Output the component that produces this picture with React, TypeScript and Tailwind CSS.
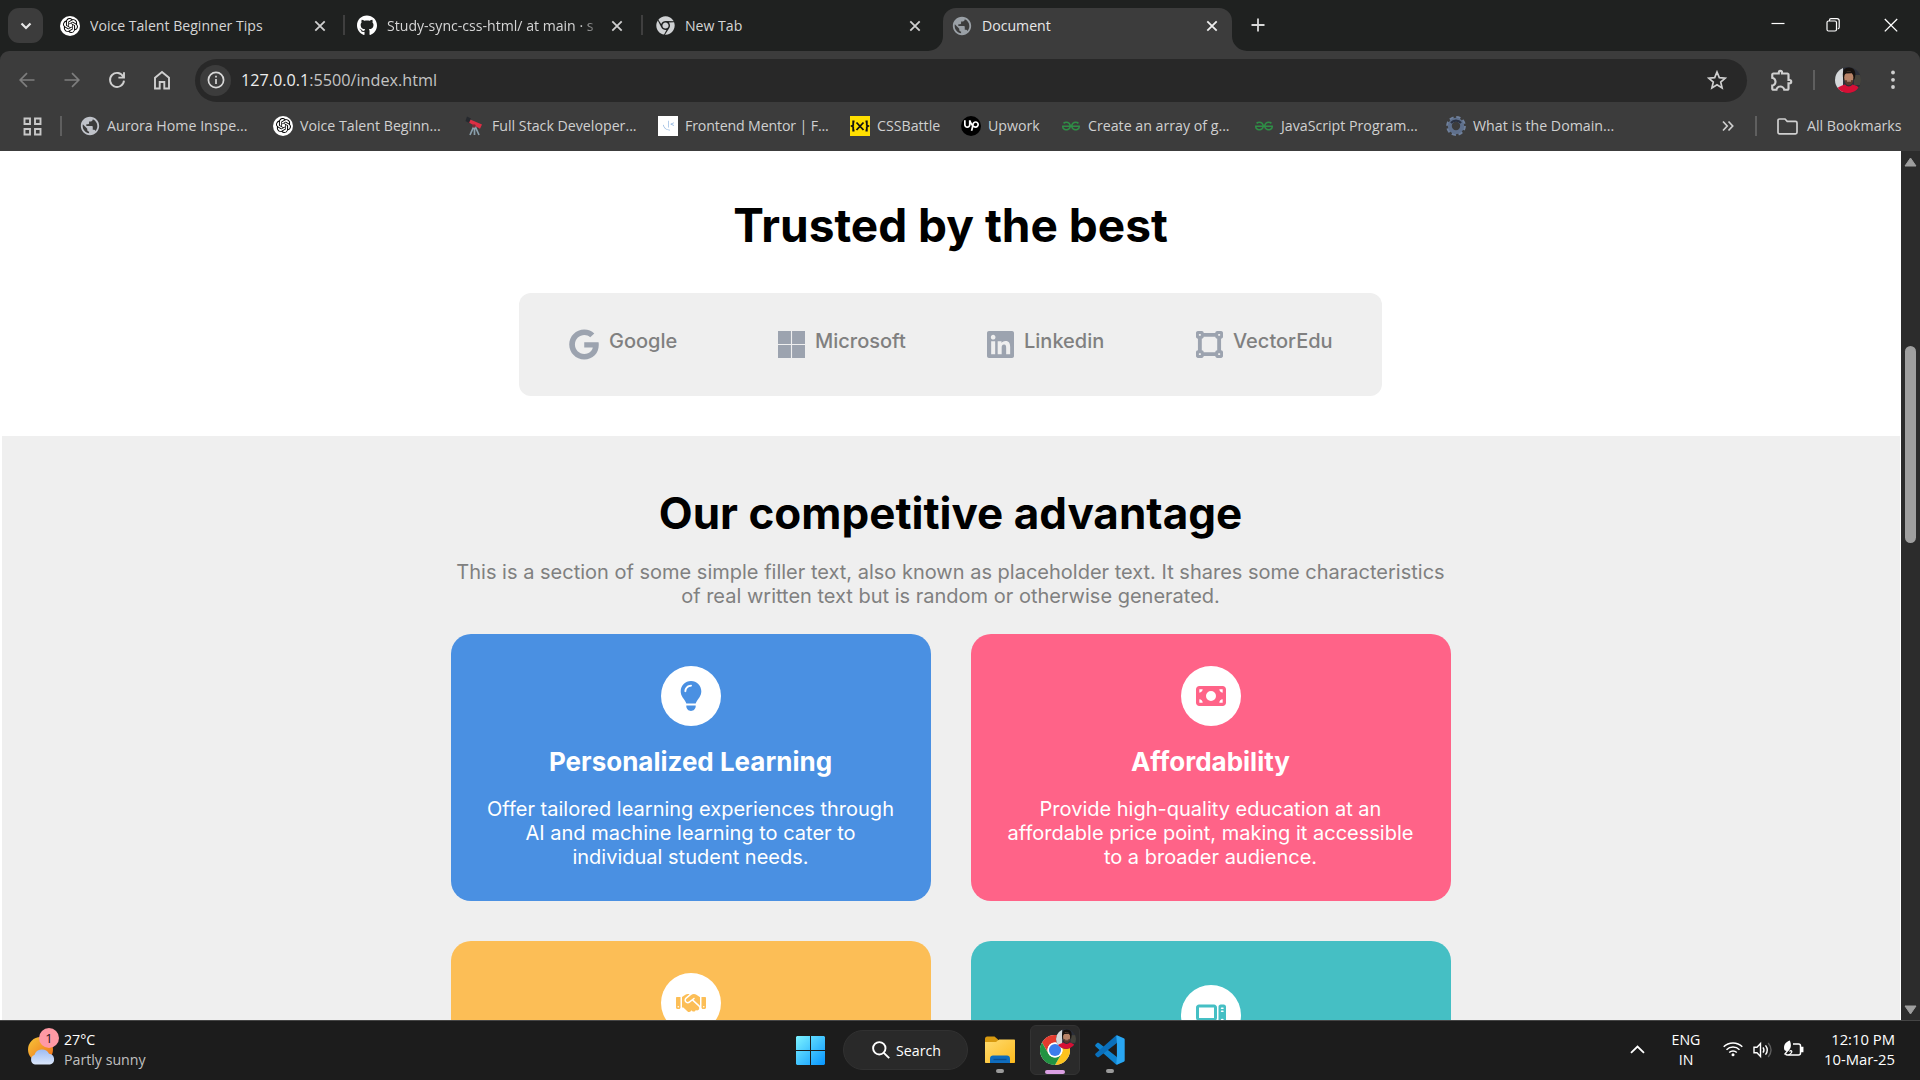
import type { ReactNode } from "react";
import { FaChrome, FaGithub } from "react-icons/fa";
import {
  FaComputer,
  FaGoogle,
  FaHandshake,
  FaLightbulb,
  FaLinkedin,
  FaMicrosoft,
  FaMoneyBill,
  FaVectorSquare,
} from "react-icons/fa6";
import { MdOutlineExtension, MdPublic } from "react-icons/md";
import { SiFrontendmentor, SiGeeksforgeeks, SiOpenai, SiUpwork } from "react-icons/si";

function OpenAiBadge() {
  return (
    <span className="flex size-5 items-center justify-center rounded-full bg-white text-black">
      <SiOpenai size={15} />
    </span>
  );
}

function Avatar({ size }: { size: number }) {
  return (
    <svg width={size} height={size} viewBox="0 0 26 26" className="block rounded-full">
      <rect width="26" height="26" fill="#2b2f3a" />
      <rect width="8" height="26" fill="#d5d8da" />
      <rect x="19" y="8" width="7" height="10" fill="#46443c" />
      <path d="M8.500 13C6.500 4 9 .500 14 .500c6 0 7.500 5 5.500 12z" fill="#17120f" />
      <ellipse cx="13.800" cy="10.500" rx="4.600" ry="6.500" fill="#b98468" />
      <path d="M9.200 8C9.500 4.500 12 4 14.500 4.200 17 4.300 18.400 5.500 18.500 8.500L17 6.300 11 6.500z" fill="#17120f" />
      <path d="M9.600 13c2 .600 6.500.600 8.500 0 0 3.500-2 5.300-4.200 5.300S9.600 16.500 9.600 13z" fill="#5a3a2c" />
      <path d="M12 14h4" stroke="#d0a08a" strokeWidth="1" />
      <path d="M0 26c1-5.500 5-7 10-8.500 2 2.500 5.500 2.500 7.500 0C22 18.500 25 20 26 26z" fill="#d60f35" />
    </svg>
  );
}

function CloseIcon({ bright }: { bright?: boolean }) {
  return (
    <svg width="12" height="12" viewBox="0 0 12 12" className={bright ? "text-[#eeeeee]" : "text-[#cfcfcf]"}>
      <path d="M1.300 1.300l9.400 9.400M10.700 1.300l-9.400 9.400" stroke="currentColor" strokeWidth="1.800" fill="none" />
    </svg>
  );
}

function Tab({ icon, title, className, fade }: { icon: ReactNode; title: string; className: string; fade?: boolean }) {
  return (
    <div className={`flex items-center ${className}`}>
      <span className="mr-[10px] flex w-5 shrink-0 justify-center">{icon}</span>
      <span className={`flex-1 overflow-hidden whitespace-nowrap ${fade ? "mask-r-from-86% mask-r-to-97%" : ""}`}>{title}</span>
      <CloseIcon />
    </div>
  );
}

function TabStrip() {
  return (
    <div className="flex h-[51px] shrink-0 items-start bg-[#1f2120] text-[14.1px] text-[#d5d5d5]">
      <div className="ml-2 mt-2 flex size-[35px] items-center justify-center rounded-[11px] bg-[#3c3c3c]">
        <svg width="12" height="8" viewBox="0 0 12 8">
          <path d="M1.500 1.500L6 6l4.500-4.500" stroke="#e8e8e8" strokeWidth="2.200" fill="none" />
        </svg>
      </div>
      <Tab className="ml-[17px] h-[51px] w-[266px]" icon={<OpenAiBadge />} title="Voice Talent Beginner Tips" />
      <div className="ml-[17px] mt-[15px] h-5 w-[2px] bg-[#3f3f3f]" />
      <Tab
        className="ml-[12px] h-[51px] w-[266px]"
        icon={<FaGithub size={21} className="text-white" />}
        title="Study-sync-css-html/ at main · s"
        fade
      />
      <div className="ml-[18px] mt-[15px] h-5 w-[2px] bg-[#3f3f3f]" />
      <Tab
        className="ml-[12px] h-[51px] w-[266px]"
        icon={<FaChrome size={19} className="text-[#cfd1d3]" />}
        title="New Tab"
      />
      <div className="ml-[7px] flex h-[51px] items-end">
        <svg width="15" height="15" viewBox="0 0 15 15">
          <path d="M0 15H15V0A15 15 0 0 1 0 15z" fill="#3c3c3c" />
        </svg>
        <div className="flex h-[43px] w-[289px] items-center rounded-t-[13px] bg-[#3c3c3c] pb-[8px] pl-[8px] pr-[14px] text-[#e8e8e8]">
          <MdPublic size={22} className="mr-[9px] text-[#9aa0a6]" />
          <span className="flex-1">Document</span>
          <CloseIcon bright />
        </div>
        <svg width="15" height="15" viewBox="0 0 15 15">
          <path d="M15 15H0V0A15 15 0 0 0 15 15z" fill="#3c3c3c" />
        </svg>
      </div>
      <svg width="14" height="14" viewBox="0 0 14 14" className="ml-[4px] mt-[18px]">
        <path d="M7 .500v13M.500 7h13" stroke="#d8d8d8" strokeWidth="1.800" />
      </svg>
      <div className="ml-auto mr-[22px] mt-[17px] flex items-center">
        <svg width="14" height="16" viewBox="0 0 14 16">
          <path d="M.500 6.500h13" stroke="#fff" strokeWidth="1.200" />
        </svg>
        <svg width="14" height="16" viewBox="0 0 14 16" className="ml-[41px]" fill="none" stroke="#fff" strokeWidth="1.200">
          <rect x="1" y="4" width="9.500" height="10" rx="1.500" />
          <path d="M3.500 4V3.200C3.500 2.300 4.200 1.600 5 1.600h6c1.200 0 2.200 1 2.200 2.200v6.500c0 .900-.600 1.600-1.500 1.700" />
        </svg>
        <svg width="14" height="16" viewBox="0 0 14 16" className="ml-[44px]">
          <path d="M.800 2l12.400 12.400M13.200 2L.800 14.400" stroke="#fff" strokeWidth="1.300" />
        </svg>
      </div>
    </div>
  );
}

function Toolbar() {
  return (
    <div className="flex h-[58px] shrink-0 items-center bg-[#1f2120]">
      <div className="flex h-full w-full items-center rounded-t-[9px] bg-[#3c3c3c]">
        <svg width="16" height="16" viewBox="0 0 16 16" className="ml-[19px]" fill="none" stroke="#7e7e7e" strokeWidth="1.700">
          <path d="M15.500 8H1.500M8 1.200L1.200 8 8 14.800" />
        </svg>
        <svg width="16" height="16" viewBox="0 0 16 16" className="ml-[29px]" fill="none" stroke="#7e7e7e" strokeWidth="1.700">
          <path d="M.500 8h14M8 1.200L14.800 8 8 14.800" />
        </svg>
        <svg width="18" height="18" viewBox="0 0 18 18" className="ml-[28px]" fill="none" stroke="#cfcfcf" strokeWidth="1.900">
          <path d="M15.300 5.800A7 7 0 1 0 16 9.600M16 1.200V6.600H10.400" />
        </svg>
        <svg width="18" height="20" viewBox="0 0 18 20" className="ml-[27px]" fill="none" stroke="#cfcfcf" strokeWidth="1.900">
          <path d="M2 7.800L9 2l7 5.800V18.500H11.300V12H6.700v6.500H2z" />
        </svg>
        <div className="ml-[24px] flex h-[43px] w-[1552px] items-center rounded-full bg-[#282828] pl-[5px] pr-[20px]">
          <div className="flex size-[31px] items-center justify-center rounded-full bg-[#3c3c3c]">
            <svg width="18" height="18" viewBox="0 0 18 18" fill="none" stroke="#d8d8d8" strokeWidth="1.700">
              <circle cx="9" cy="9" r="7.600" />
              <path d="M9 8v5M9 4.800v1.800" />
            </svg>
          </div>
          <div className="ml-[10px] flex-1 text-[16.2px] text-[#c4c4c4]">
            <span className="text-[#ededed]">127.0.0.1</span>:5500/index.html
          </div>
          <svg width="20" height="20" viewBox="0 0 20 20" fill="none" stroke="#cfcfcf" strokeWidth="1.700">
            <path d="M10 2l2.300 5.600 6 .500-4.600 3.900 1.400 5.900L10 14.800l-5.100 3.100 1.400-5.900L1.700 8.100l6-.500z" />
          </svg>
        </div>
        <MdOutlineExtension size={26} className="ml-[22px] text-[#cfcfcf]" />
        <div className="ml-[18px] h-5 w-[2px] bg-[#5f5f5f]" />
        <div className="ml-[20px]">
          <Avatar size={26} />
        </div>
        <svg width="4" height="20" viewBox="0 0 4 20" className="ml-[30px]" fill="#cfcfcf">
          <circle cx="2" cy="2.500" r="1.900" />
          <circle cx="2" cy="9.800" r="1.900" />
          <circle cx="2" cy="17" r="1.900" />
        </svg>
      </div>
    </div>
  );
}

function Bookmark({ icon, title, className }: { icon: ReactNode; title: string; className: string }) {
  return (
    <div className={`flex shrink-0 items-center whitespace-nowrap ${className}`}>
      <span className="mr-[7px] flex size-5 shrink-0 items-center justify-center">{icon}</span>
      {title}
    </div>
  );
}

function BookmarkBar() {
  return (
    <div className="flex h-[42px] shrink-0 items-center bg-[#3c3c3c] pb-[8px] text-[14.2px] text-[#d0d0d0]">
      <svg width="19" height="19" viewBox="0 0 19 19" className="ml-[23px]" fill="none" stroke="#c8c8c8" strokeWidth="1.900">
        <path d="M1.500 1.500h5.500v5.500h-5.500zM12 1.500h5.500v5.500H12zM1.500 12h5.500v5.500h-5.500zM12 12h5.500v5.500H12z" />
      </svg>
      <div className="ml-[18px] mr-[18px] h-5 w-[2px] bg-[#5f5f5f]" />
      <Bookmark className="w-[193px]" icon={<MdPublic size={22} className="shrink-0 text-[#bfc2c9]" />} title="Aurora Home Inspe..." />
      <Bookmark className="w-[192px]" icon={<OpenAiBadge />} title="Voice Talent Beginn..." />
      <Bookmark
        className="w-[193px]"
        icon={
          <svg width="20" height="20" viewBox="0 0 20 20">
            <path d="M9 10l-4 9M9.500 10v9M10 10l4 9" stroke="#8aa0ad" strokeWidth="1.700" />
            <path d="M4 3l13 5.500-2 4.200L3 6z" fill="#dd2e44" />
            <path d="M2 .500l4 2-2 4.500-3.500-2z" fill="#26292e" />
            <circle cx="9" cy="10" r="1.800" fill="#7a2a35" />
          </svg>
        }
        title="Full Stack Developer..."
      />
      <Bookmark
        className="w-[192px] tracking-[-0.15px]"
        icon={
          <span className="flex size-5 items-center justify-center bg-white text-[#8fb4de]">
            <SiFrontendmentor size={11} />
          </span>
        }
        title="Frontend Mentor | F..."
      />
      <Bookmark
        className="w-[111px]"
        icon={
          <svg width="20" height="20" viewBox="0 0 20 20" fill="none" stroke="#111" strokeWidth="1.800">
            <rect width="20" height="20" fill="#ffdf00" stroke="none" />
            <path d="M4.500 5.500H3.200V9L1.800 10l1.400 1v3.500h1.300M15.500 5.500h1.300V9l1.400 1-1.400 1v3.500h-1.300M6.500 6.500l7 7.500M13.500 6.500l-7 7.500" />
          </svg>
        }
        title="CSSBattle"
      />
      <Bookmark
        className="w-[100px]"
        icon={
          <span className="flex size-5 items-center justify-center rounded-full bg-black text-white">
            <SiUpwork size={15} />
          </span>
        }
        title="Upwork"
      />
      <Bookmark className="w-[193px]" icon={<SiGeeksforgeeks size={18} className="text-[#2f8d46]" />} title="Create an array of g..." />
      <Bookmark className="w-[192px]" icon={<SiGeeksforgeeks size={18} className="text-[#2f8d46]" />} title="JavaScript Program..." />
      <Bookmark
        className="w-[268px]"
        icon={
          <svg width="20" height="20" viewBox="0 0 20 20" fill="none">
            <circle cx="10" cy="10" r="8.700" stroke="#70819c" strokeWidth="2.400" strokeDasharray="4.200 2.630" />
            <circle cx="10" cy="10" r="6.200" stroke="#5f708c" strokeWidth="4" />
            <path d="M5 7A6.300 6.300 0 0 1 15 7" stroke="#2b3242" strokeWidth="2.200" />
          </svg>
        }
        title="What is the Domain..."
      />
      <svg width="12" height="12" viewBox="0 0 12 12" className="ml-[8px]" fill="none" stroke="#cfcfcf" strokeWidth="1.700">
        <path d="M1 1.500L5.200 6 1 10.500M6.500 1.500L10.700 6l-4.200 4.500" />
      </svg>
      <div className="ml-[21px] h-5 w-[2px] bg-[#5f5f5f]" />
      <svg width="21" height="17" viewBox="0 0 21 17" className="ml-[20px]" fill="none" stroke="#cfcfcf" strokeWidth="1.700">
        <path d="M1 2.500C1 1.600 1.600 1 2.500 1H8l2.200 2.300h8.300c.900 0 1.500.600 1.500 1.500v9.500c0 .900-.600 1.500-1.500 1.500h-16C1.600 15.800 1 15.200 1 14.300z" />
      </svg>
      <span className="ml-[9px] whitespace-nowrap">All Bookmarks</span>
    </div>
  );
}

const companies = [
  { name: "Google", icon: <FaGoogle size={31} className="w-[30px]" />, gap: "gap-[10px]" },
  { name: "Microsoft", icon: <FaMicrosoft size={31} className="w-[27px]" />, gap: "gap-[10px]" },
  { name: "Linkedin", icon: <FaLinkedin size={31} className="w-[27px]" />, gap: "gap-[10px]" },
  { name: "VectorEdu", icon: <FaVectorSquare size={31} className="w-[27px]" />, gap: "gap-[10px]" },
];

function Card({ className, icon, title, text }: { className: string; icon: ReactNode; title?: string; text?: string }) {
  return (
    <div className={`flex h-[267px] w-[480px] flex-col items-center rounded-[20px] px-[30px] text-center text-white ${className}`}>
      <div className="flex size-[60px] shrink-0 items-center justify-center rounded-full bg-white">{icon}</div>
      {title && <h3 className="mt-[20px] text-[26px] font-bold leading-8">{title}</h3>}
      {text && <p className="mt-[19px] text-[20px] leading-6">{text}</p>}
    </div>
  );
}

function Page() {
  return (
    <div className="flex min-h-0 flex-1">
      <main className="flex min-w-0 flex-1 flex-col overflow-hidden bg-white pl-[2px] pr-px font-['Inter',sans-serif]">
        <section className="flex h-[285px] shrink-0 flex-col items-center pr-px">
          <h1 className="mt-[46px] text-[46px] font-bold leading-[56px] text-black">Trusted by the best</h1>
          <div className="mt-[40px] grid h-[103px] w-[863px] grid-cols-[repeat(4,209px)] rounded-[12px] bg-[#efefef] pl-[50px] pt-[36px]">
            {companies.map((c) => (
              <div key={c.name} className={`flex h-[31px] text-[#9ca3af] ${c.gap}`}>
                {c.icon}
                <span className="text-[20px] font-medium leading-6 text-[#808080]">{c.name}</span>
              </div>
            ))}
          </div>
        </section>
        <section className="flex flex-1 shrink-0 flex-col items-center bg-[#efefef] pr-px">
          <h2 className="mt-[50px] text-[44px] font-bold leading-[54px] text-black">Our competitive advantage</h2>
          <p className="mt-[20px] w-[1000px] text-center text-[20px] leading-6 text-[#808080]">
            This is a section of some simple filler text, also known as placeholder text. It shares some characteristics of real
            written text but is random or otherwise generated.
          </p>
          <div className="mt-[26px] grid grid-cols-2 gap-10">
            <Card
              className="bg-[#4a90e2] pt-8"
              icon={<FaLightbulb size={30} className="text-[#4a90e2]" />}
              title="Personalized Learning"
              text="Offer tailored learning experiences through AI and machine learning to cater to individual student needs."
            />
            <Card
              className="bg-[#ff6388] pt-8"
              icon={<FaMoneyBill size={30} className="text-[#ff6388]" />}
              title="Affordability"
              text="Provide high-quality education at an affordable price point, making it accessible to a broader audience."
            />
            <Card className="bg-[#fcbe56] pt-8" icon={<FaHandshake size={30} className="text-[#fcbe56]" />} />
            <Card className="bg-[#45bfc4] pt-11" icon={<FaComputer size={30} className="text-[#45bfc4]" />} />
          </div>
        </section>
      </main>
      <div className="flex w-[19px] shrink-0 flex-col items-center bg-[#2c2c2c]">
        <svg width="13" height="10" viewBox="0 0 13 10" className="mt-[6px]">
          <path d="M6.500 1L12 9H1z" fill="#9f9f9f" stroke="#9f9f9f" strokeLinejoin="round" />
        </svg>
        <div className="mt-[179px] h-[197px] w-[11px] rounded-full bg-[#9f9f9f]" />
        <svg width="13" height="10" viewBox="0 0 13 10" className="mb-[5px] mt-auto">
          <path d="M6.500 9L12 1H1z" fill="#9f9f9f" stroke="#9f9f9f" strokeLinejoin="round" />
        </svg>
      </div>
    </div>
  );
}

function ChromeLogo() {
  return (
    <svg width="30" height="30" viewBox="0 0 48 48">
      <circle cx="24" cy="24" r="24" fill="#fff" />
      <path d="M3.200 12A24 24 0 0 1 44.800 12H24A12 12 0 0 0 13.600 30z" fill="#e33b2e" />
      <path d="M44.800 12A24 24 0 0 1 24 48L34.400 30A12 12 0 0 0 24 12z" fill="#fcc31e" />
      <path d="M24 48A24 24 0 0 1 3.200 12L13.600 30A12 12 0 0 0 34.400 30z" fill="#229342" />
      <circle cx="24" cy="24" r="12" fill="#fff" />
      <circle cx="24" cy="24" r="9.700" fill="#3b7ded" />
    </svg>
  );
}

function Taskbar() {
  return (
    <div className="flex h-[60px] shrink-0 items-start border-t border-[#454545] bg-[#1c1c1c] text-[14.2px] text-white">
      <div className="ml-[27px] mt-[5px] w-[37px]">
        <svg width="33" height="40" viewBox="0 0 33 40">
          <defs>
            <linearGradient id="sun" x1="0" y1="0" x2="1" y2="1">
              <stop offset="0" stopColor="#f6c63a" />
              <stop offset="1" stopColor="#f06a16" />
            </linearGradient>
            <linearGradient id="cloud" x1="0" y1="0" x2="0" y2="1">
              <stop offset="0" stopColor="#9dbcf3" />
              <stop offset="1" stopColor="#dbe7fb" />
            </linearGradient>
          </defs>
          <circle cx="13.500" cy="23.500" r="12.500" fill="url(#sun)" />
          <path d="M8 38.500a5 5 0 0 1-.600-9.600A8 8 0 0 1 22 27.700a5.500 5.500 0 0 1 1 10.800z" fill="url(#cloud)" />
          <circle cx="22" cy="12" r="10" fill="#ff99a4" />
          <text x="22" y="17" textAnchor="middle" fontSize="13" fill="#2a1216" className="font-['Open_Sans',sans-serif]">
            1
          </text>
        </svg>
      </div>
      <div className="mt-[9px] w-[110px] leading-5">
        <div>27°C</div>
        <div className="text-[#c0c0c0]">Partly sunny</div>
      </div>
      <svg width="29" height="29" viewBox="0 0 29 29" className="ml-[622px] mt-[15px]">
        <defs>
          <linearGradient id="win" x1="0" y1="0" x2="1" y2="1">
            <stop offset="0" stopColor="#7df3ff" />
            <stop offset="1" stopColor="#0795ff" />
          </linearGradient>
          <clipPath id="panes">
            <path d="M1 0H14V14H0V1zM15 0H28L29 1V14H15zM0 15H14V29H1L0 28zM15 15H29V28L28 29H15z" />
          </clipPath>
        </defs>
        <rect width="29" height="29" fill="url(#win)" clipPath="url(#panes)" />
      </svg>
      <div className="ml-[18px] mt-[9px] flex h-10 w-[125px] items-center rounded-full border border-[#313131] bg-[#292929] pl-[28px]">
        <svg width="18" height="18" viewBox="0 0 18 18" fill="none" stroke="#fff" strokeWidth="1.900">
          <circle cx="7.300" cy="7.300" r="6.200" />
          <path d="M11.800 11.800l5.400 5.400" />
        </svg>
        <span className="ml-[6px] mt-px">Search</span>
      </div>
      <div className="ml-[17px] flex w-[30px] flex-col items-center">
        <svg width="30" height="28" viewBox="0 0 30 28" className="mt-[15px]">
          <defs>
            <linearGradient id="folder" x1="0" y1="0" x2="1" y2="1">
              <stop offset="0" stopColor="#ffdb70" />
              <stop offset="1" stopColor="#fdba1c" />
            </linearGradient>
          </defs>
          <path d="M0 3C0 1.500.800.500 2.200.500H9.500L13 3.500V9H0z" fill="#d89a10" />
          <path d="M0 6h11l3-2.500H29c.600 0 1 .400 1 1V26c0 .600-.400 1-1 1H1c-.600 0-1-.400-1-1z" fill="url(#folder)" />
          <path d="M5 27v-4.500C5 20.500 6.300 19.500 8 19.500H22c1.700 0 3 1 3 3V27z" fill="#0f6cbd" />
          <path d="M8.500 23.500h13" stroke="#0a4f93" strokeWidth="1.400" />
        </svg>
        <div className="mt-[5px] h-1 w-2 rounded-full bg-[#9a9a9a]" />
      </div>
      <div className="relative ml-[15px] mt-1 flex h-[50px] w-[50px] flex-col items-center rounded-[6px] border border-[#333333] bg-[#2a2a2a] pt-[9px]">
        <ChromeLogo />
        <div className="mt-[5px] h-1 w-5 rounded-full bg-[#dba0e3]" />
        <div className="absolute left-[25px] top-[3px]">
          <Avatar size={20} />
        </div>
      </div>
      <div className="ml-[15px] flex w-[30px] flex-col items-center">
        <svg width="30" height="30" viewBox="0 0 100 100" className="mt-[14px]">
          <path d="M75 98L71 99 2 38c-2-2-2-4 0-6l5-5c2-2 4-2 6 0L73 73z" fill="#0f83cf" />
          <path d="M75 2L71 1 2 62c-2 2-2 4 0 6l5 5c2 2 4 2 6 0L73 27z" fill="#0a6fbb" />
          <path d="M75 2L96 11C98 12 99 13 99 15V85c0 2-1 3-3 4L75 98c-2 1-3 0-4-1L73 73V27L71 3c1-1 2-2 4-1z" fill="#29a6f2" />
        </svg>
        <div className="mt-[4px] h-1 w-2 rounded-full bg-[#9a9a9a]" />
      </div>
      <svg width="15" height="9" viewBox="0 0 15 9" className="ml-auto mt-[24px]">
        <path d="M1 7.800L7.500 1.500 14 7.800" stroke="#fff" strokeWidth="1.800" fill="none" />
      </svg>
      <div className="ml-[21px] mt-[9px] w-[40px] text-center leading-5">
        <div>ENG</div>
        <div>IN</div>
      </div>
      <svg width="20" height="16" viewBox="0 0 20 16" className="ml-[17px] mt-[20px]" fill="none" stroke="#fff" strokeWidth="1.500">
        <path d="M.700 5.800a13 13 0 0 1 18.600 0M3.500 8.800a9.200 9.200 0 0 1 13 0M6.200 11.500a5.400 5.400 0 0 1 7.600 0" />
        <circle cx="10" cy="13.700" r="1.500" fill="#fff" stroke="none" />
      </svg>
      <svg width="20" height="18" viewBox="0 0 20 18" className="ml-[10px] mt-[20px]" fill="none" stroke="#fff" strokeWidth="1.400">
        <path d="M1 6.300h3L7.500 2.500v13L4 11.800H1z" />
        <path d="M10 6.300c1.200 1.700 1.200 3.700 0 5.400M12.500 4.300c2.200 2.900 2.200 6.500 0 9.400" />
        <path d="M15.200 2c3.500 4.300 3.500 9.700 0 14" stroke="#5c5c5c" />
      </svg>
      <svg width="21" height="18" viewBox="0 0 21 18" className="ml-[10px] mt-[19px]" fill="none" stroke="#fff" strokeWidth="1.500">
        <path d="M10 4h5.500c1.200 0 2 .800 2 2v7c0 1.200-.800 2-2 2h-11c-1 0-1.600-.400-2-1" />
        <path d="M18.500 7.500v4h1.200v-4z" fill="#fff" />
        <path d="M1 8C1 4 3 2 6.800.500 8.800 5 8 9.500 4.500 11 2 11.300 1 10 1 8z" fill="#fff" stroke="none" />
        <path d="M1.500 14.500L6 9M6.500 11.500c1.500-1.500 3-.500 2 1s-1.500 1.500-3 2.500" strokeWidth="1.200" />
      </svg>
      <div className="mr-[25px] mt-[8px] w-[91px] whitespace-nowrap text-right text-[14.8px] leading-5">
        <div>12:10 PM</div>
        <div>10-Mar-25</div>
      </div>
    </div>
  );
}

export default function App() {
  return (
    <div className="flex h-[1080px] w-[1920px] flex-col overflow-hidden bg-[#3c3c3c] font-['Open_Sans',sans-serif]">
      <TabStrip />
      <Toolbar />
      <BookmarkBar />
      <Page />
      <Taskbar />
    </div>
  );
}
